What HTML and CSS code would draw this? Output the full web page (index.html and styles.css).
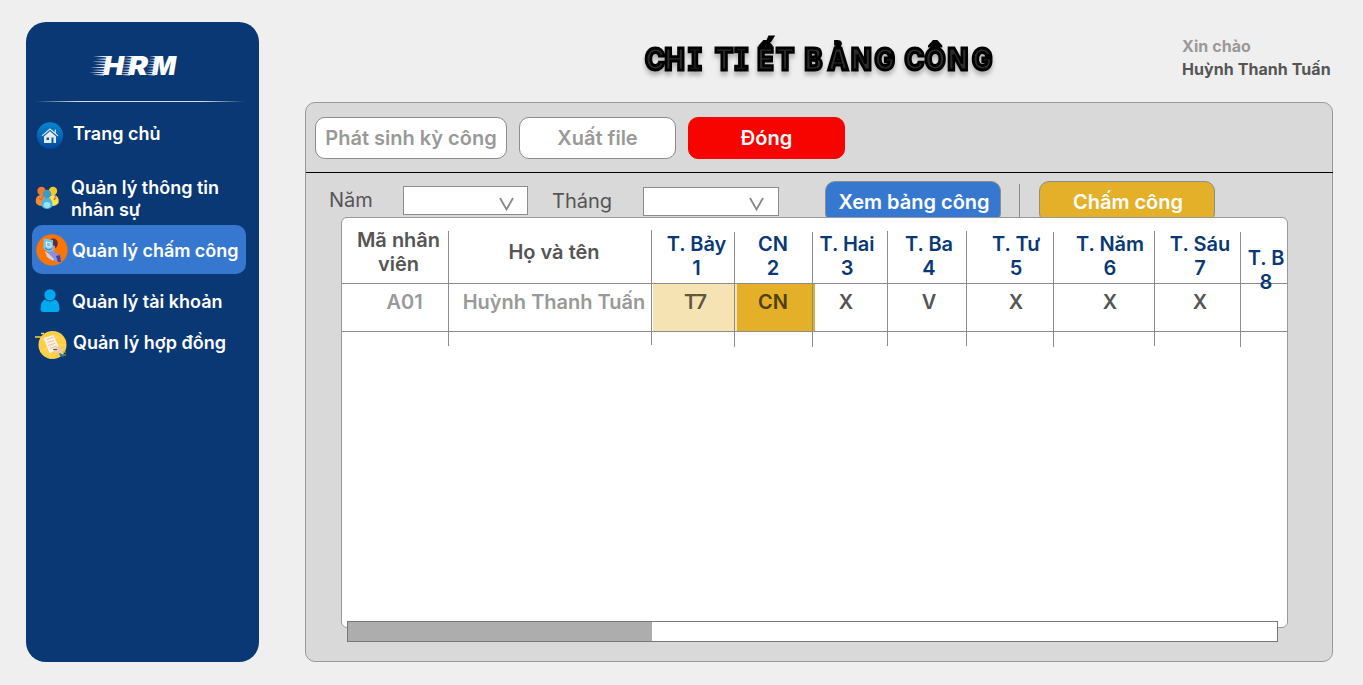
FILE: index.html
```html
<!DOCTYPE html>
<html lang="vi">
<head>
<meta charset="utf-8">
<title>Chi tiết bảng công</title>
<link rel="stylesheet" href="styles.css">
</head>
<body>
<div class="app">
  <aside class="sidebar">
    <div class="logo">
      <svg width="110" height="40" viewBox="0 -7 110 40">
        <g class="logo-text">
          <text x="13" y="23" textLength="21" lengthAdjust="spacingAndGlyphs">H</text>
          <text x="38" y="23" textLength="20" lengthAdjust="spacingAndGlyphs">R</text>
          <text x="62" y="23" textLength="24" lengthAdjust="spacingAndGlyphs">M</text>
        </g>
        <g class="streaks">
          <path d="M3 4.300L18 4v1.500zM6 7L17 6.600v1.500zM2 9.800L17 9.300v1.500zM4 12.500L16 12v1.500zM0 15.300L16 14.800v1.500zM2 18L15 17.500V19zM-1 20.300L15 20v1.400zM2 22.800L14 22v1.500z"/>
          <path d="M34 4h10v1.400zM33 7L43 6.500v1.500zM33 9.700L43 9.200v1.500zM32 12.400L42 12v1.500zM31 15L42 14.500V16zM31 18L41 17.500V19zM29 20.600L41 20v1.500zM29 22.800L40 22v1.500z"/>
          <path d="M59 4h10v1.400zM59 7L68 6.500v1.500zM58 9.700L68 9.200v1.500zM57 12.400L67 12v1.500zM56 15L67 14.500V16zM57 18L66 17.500V19zM55 20.600L66 20v1.500zM54 22.800L65 22v1.500z"/>
        </g>
      </svg>
    </div>
    <div class="rule"></div>
    <nav class="nav">
      <a class="item home">
        <svg width="28" height="28" viewBox="0 0 28 28">
          <defs><linearGradient id="sky" x2="0" y2="1"><stop offset="0" stop-color="#0786cf"/><stop offset="1" stop-color="#0647a0"/></linearGradient></defs>
          <circle cx="14" cy="14.500" r="13.200" fill="url(#sky)"/>
          <path d="M6 14.900L14 8.100l8 6.800M19.300 8.500v4" fill="none" stroke="#dfe6ee" stroke-width="1.200"/>
          <path d="M8 15.500l6-5.200 6 5.200v6.500H8z" fill="#e6e9ed"/>
          <path d="M10.500 16.500h2.500v2.500h-2.500zM15.500 16.500H17.500V22h-2z" fill="#075daa"/>
        </svg>
        <span>Trang chủ</span>
      </a>
      <a class="item staff">
        <svg width="25" height="24" viewBox="0 0 25 24">
          <circle cx="6.500" cy="5" r="4.200" fill="#f4792b"/><path d="M1 17c-1-5 1-8 5.500-8s6 3 6 8c-3 4-9 4-11.500 0z" fill="#f58b38"/>
          <circle cx="18" cy="5" r="4.200" fill="#f4c72a"/><path d="M12 17c0-5 2-8 6-8s6.500 3 5.500 8c-3 4-9 4-11.500 0z" fill="#ffe04d"/>
          <path d="M4 12l2.500 2 1-4M20.500 10l-1.500 4 2.500-2" stroke="#e9582a" fill="none"/>
          <path d="M6.500 20c0-5 1.500-8.500 5.500-8.500s5.500 3.500 5.500 8.500c-2.500 4-8.500 4-11 0z" fill="#49b5e1"/><circle cx="12" cy="8" r="4.200" fill="#3c99ca"/>
          <ellipse cx="12" cy="19" rx="3.500" ry="3" fill="#9ae2f4"/>
        </svg>
        <span>Quản lý thông tin<br>nhân sự</span>
      </a>
      <a class="item time active">
        <svg width="32" height="32" viewBox="0 0 32 32">
          <circle cx="16" cy="16" r="15.700" fill="#fb7404"/>
          <path d="M14 6c3-3 9-1 7.500 5-1 4-4 4-7 1z" fill="#632c3c"/>
          <path d="M14 10l5 2v5l-4 2-3-3z" fill="#d98a78"/>
          <path d="M12 17l5 0 8 5v6q-3 1-6-1l-6-6z" fill="#8b8fdc"/>
          <path d="M20 22l4-1 1 7-3 0z" fill="#3e469f"/>
          <path d="M8 4.500l9 1.500v11l-5 1-5-4z" fill="#72c6ed"/>
          <path d="M10 8l5 1v4l-4 0z" fill="none" stroke="#e0f7ff"/><path d="M9 14l3 2 4-1" stroke="#377ab5" fill="none"/>
          <path d="M9 17l4 3 5 5-1 2-6-4z" fill="#d6cfe8"/>
        </svg>
        <span>Quản lý chấm công</span>
      </a>
      <a class="item account">
        <svg width="20" height="24" viewBox="0 0 20 24">
          <path d="M5 10.500q5 3.500 10 0Q19.500 12 19.500 20q0 3-3 3H3.500q-3 0-3-3Q.500 12 5 10.500z" fill="#00a9ee"/>
          <circle cx="10" cy="6" r="6" fill="#00a9ee" stroke="#0a3874" stroke-width=".6"/>
        </svg>
        <span>Quản lý tài khoản</span>
      </a>
      <a class="item contract">
        <svg width="32" height="30" viewBox="0 0 32 30">
          <circle cx="17.500" cy="15" r="14" fill="#ffcf48"/>
          <path d="M17 15L5 8M17 15L31 15M17 15L15 29M17 15L24 3M17 15L5 22" stroke="#ffdc74"/>
          <path d="M0 7h8M6 3.500h3M5 9h4" stroke="#ffcf48" stroke-width="1.300"/>
          <path d="M8.500 8l10-3 6 14-10 4z" fill="#fff3e8"/>
          <path d="M11.500 9.500l6.500-2M12.500 12.500l6.500-2M13.500 15.500l6.500-2.200M15 18.500l6.500-2.500" stroke="#f7bb98" stroke-width="1.200"/>
          <path d="M18 19l6-3 4 4-1 4-7-1z" fill="#f5c6ab"/>
          <path d="M18 19.500l4 0" stroke="#187d83"/><path d="M24 23l3 1 2 3-4-1z" fill="#17888c"/><path d="M28 22h3M28 25h3" stroke="#c7a345"/>
        </svg>
        <span>Quản lý hợp đồng</span>
      </a>
    </nav>
  </aside>

  <main class="main">
    <header class="header">
      <h1 class="title">
        <svg width="354" height="64" viewBox="0 0 354 64">
          <g transform="scale(.9 1)">
            <text y="48" x="1.200 22.800 47.500">CH<tspan class="slab">I</tspan></text>
            <text y="48" x="79 99.300 125.800 146.800">T<tspan class="slab">I</tspan>ẾT</text>
            <text y="48" x="178.300 204.300 230.100 256.200">BẢNG</text>
            <text y="48" x="289.500 312 337.200 364.500">CÔNG</text>
          </g>
        </svg>
      </h1>
      <div class="user"><span class="hello">Xin chào</span><span class="name">Huỳnh Thanh Tuấn</span></div>
    </header>
    <section class="panel">
      <div class="actions">
        <button class="btn wide">Phát sinh kỳ công</button>
        <button class="btn">Xuất file</button>
        <button class="btn close">Đóng</button>
      </div>
      <div class="filters">
        <label class="year">Năm</label>
        <div class="select sel-year"><svg width="16" height="14" viewBox="0 0 16 14"><path d="M2 1L8.500 12.500 15 1"/></svg></div>
        <label class="month">Tháng</label>
        <div class="select sel-month"><svg width="16" height="14" viewBox="0 0 16 14"><path d="M2 1L8.500 12.500 15 1"/></svg></div>
        <button class="tab view">Xem bảng công</button>
        <div class="divider"></div>
        <button class="tab check">Chấm công</button>
      </div>
      <div class="sheet">
        <div class="col c-id s1"><div class="head">Mã nhân<br>viên</div><div class="cell">A01</div></div>
        <div class="col c-name s0"><div class="head">Họ và tên</div><div class="cell">Huỳnh Thanh Tuấn</div></div>
        <div class="col day c1 s2"><div class="head">T. Bảy<br>1</div><div class="cell">T7</div></div>
        <div class="col day c2 s2"><div class="head">CN<br>2</div><div class="cell">CN</div></div>
        <div class="col day c3 s1"><div class="head">T. Hai<br>3</div><div class="cell">X</div></div>
        <div class="col day c4 s1"><div class="head">T. Ba<br>4</div><div class="cell">V</div></div>
        <div class="col day c5 s2"><div class="head">T. Tư<br>5</div><div class="cell">X</div></div>
        <div class="col day c6 s1"><div class="head">T. Năm<br>6</div><div class="cell">X</div></div>
        <div class="col day c7 s2"><div class="head">T. Sáu<br>7</div><div class="cell">X</div></div>
        <div class="col day c8 s1"><div class="head">T. B<br>8</div><div class="cell"></div></div>
      </div>
      <div class="scroll"><div class="thumb"></div></div>
    </section>
  </main>
</div>
</body>
</html>
```
FILE: styles.css
```css
* { box-sizing: border-box; }
body { margin: 0; background: #efefef; font-family: Inter, "Liberation Sans", sans-serif; }
svg { display: block; flex: none; overflow: visible; }
button { font-family: inherit; margin: 0; }
.app { display: flex; gap: 46px; width: 1363px; height: 685px; padding: 22px 30px 23px 26px; overflow: hidden; }

.sidebar { width: 233px; height: 640px; flex: none; border-radius: 20px; background: #0a3874; color: #fff; }
.logo { padding: 23px 0 0 64px; height: 78px; }
.logo-text { font: italic 900 26px Inter, sans-serif; fill: #fff; }
.streaks { fill: #e8eef6; }
.rule { height: 1px; margin: 1px 14px 0 9px; background: linear-gradient(90deg, transparent, #d9d9d9 20%, #d9d9d9 80%, transparent); }
.nav { display: flex; flex-direction: column; padding: 0 13px 0 6px; }
.item { display: flex; align-items: center; font-size: 18px; font-weight: 600; line-height: 22px; white-space: nowrap; }
.home { height: 28px; margin-top: 19px; padding-left: 4px; gap: 9px; }
.home span { margin-top: -2px; }
.staff { height: 44px; margin-top: 28px; padding-left: 3px; gap: 11px; }
.staff svg { margin-top: -3px; }
.active { background: #3678d0; border-radius: 10px; }
.time { height: 49px; margin-top: 4px; padding-left: 4px; gap: 4px; }
.time span { margin-top: 3px; letter-spacing: -.04px; }
.account { height: 24px; margin-top: 15px; padding-left: 8px; gap: 12px; }
.account span { margin-top: 1px; }
.contract { height: 30px; margin-top: 17px; padding-left: 3px; gap: 6px; }
.contract span { margin-top: -5px; }
.contract svg { margin-top: -1px; }

.main { width: 1028px; }
.header { display: grid; grid-template-columns: 339px 1fr 151px; height: 80px; }
.title { grid-column: 2; margin: 0; font: 800 30px Inter, sans-serif; fill: #2c2c2c; stroke: #000; stroke-width: 3px; }
.slab { font: bold 30px "DejaVu Sans Mono", monospace; }
.title svg { filter: drop-shadow(0 4px 2px rgba(0,0,0,.25)); }
.user { display: flex; flex-direction: column; padding-top: 13px; font-size: 16px; font-weight: 700; line-height: 23px; letter-spacing: .07px; white-space: nowrap; }
.hello { color: #999; }
.name { color: #555; }

.panel { height: 560px; background: #d9d9d9; border: 1px solid #999; border-radius: 10px; }
.actions { display: flex; gap: 12px; height: 70px; padding: 14px 9px; border-bottom: 1px solid #000; margin-right: -1px; }
.btn { width: 157px; height: 42px; padding: 0; border: 1px solid #8c8c8c; border-radius: 10px; background: #fff; color: #999; font-size: 20px; font-weight: 600; white-space: nowrap; }
.wide { width: 192px; }
.close { background: #f70400; border-color: #f70400; color: #fff; }
.filters { display: flex; height: 44px; padding: 8px 0 0 23px; overflow: hidden; }
.filters label { font-size: 20px; line-height: 24px; color: #555; padding-top: 7px; }
.year { width: 74px; }
.month { width: 91px; margin-top: 1px; }
.select { height: 29px; background: #fff; border: 1px solid #8c8c8c; display: flex; justify-content: flex-end; padding: 10px 13px 0 0; }
.select path { fill: none; stroke: #888; stroke-width: 1.800; }
.sel-year { width: 125px; margin: 5px 24px 0 0; }
.sel-month { width: 136px; margin: 6px 46px 0 0; padding: 9px 14px 0 0; }
.tab { width: 176px; height: 42px; padding: 0 0 0 2px; border: 1px solid #8c8c8c; border-radius: 10px; color: #fff; font-size: 20px; font-weight: 600; white-space: nowrap; }
.view { background: #3678d0; }
.check { background: #e4af29; }
.divider { width: 1px; height: 38px; margin: 3px 19px 0 18px; background: #8c8c8c; }

.sheet { display: flex; width: 947px; height: 411px; margin-left: 35px; background: #fff; border: 1px solid #999; border-radius: 6px; overflow: hidden; }
.col { --shift: 0px; display: flex; flex-direction: column; flex: none; height: 115px; margin-top: calc(12px + var(--shift)); border-right: 1px solid #8c8c8c; text-align: center; font-size: 20px; line-height: 24px; font-weight: 600; white-space: nowrap; color: #555; }
.s1 { --shift: 1px; }
.s2 { --shift: 2px; }
.head { height: calc(54px - var(--shift)); border-bottom: 1px solid #8c8c8c; display: flex; align-items: flex-end; justify-content: center; padding-bottom: 3px; }
.cell { height: 48px; border-bottom: 1px solid #8c8c8c; padding-top: 6px; }
.day .head { color: #0a3874; }
.c-id { width: 107px; }
.c-id .head { padding: 0 0 7px 7px; }
.c-id .cell { padding-left: 19px; color: #999; }
.c-name { width: 203px; }
.c-name .head { padding: 0 0 19px 8px; }
.c-name .cell { padding-left: 8px; color: #999; }
.c1 { width: 83px; }
.c1 .head { padding-left: 7px; }
.c1 .cell { padding-left: 5px; color: #615740; background: linear-gradient(90deg, #fff 1px, #f6e3b4 1px); }
.c2 { width: 78px; }
.c2 .head { padding-right: 1px; }
.c2 .cell { padding-right: 1px; color: #51400f; background: linear-gradient(90deg, #f6e3b4 2px, #e4af29 2px); }
.c3 { width: 75px; }
.c3 .head { padding-right: 6px; }
.c3 .cell { padding-right: 8px; background: linear-gradient(90deg, #e4af29 2px, #fff 2px); }
.c4 { width: 79px; }
.c4 .head, .c4 .cell { padding-left: 4px; }
.c5 { width: 87px; }
.c5 .head, .c5 .cell { padding-left: 12px; }
.c6 { width: 101px; }
.c6 .head, .c6 .cell { padding-left: 12px; }
.c7 { width: 86px; }
.c7 .head, .c7 .cell { padding-left: 5px; }
.c8 { width: 47px; border-right: 0; }
.c8 .head { padding: 0 0 0 3px; align-items: flex-start; padding-top: 15px; }

.scroll { position: relative; width: 931px; height: 21px; margin: -7px 0 0 41px; background: #fff; border: 1px solid #777; }
.thumb { width: 304px; height: 19px; background: #adadad; }
```
